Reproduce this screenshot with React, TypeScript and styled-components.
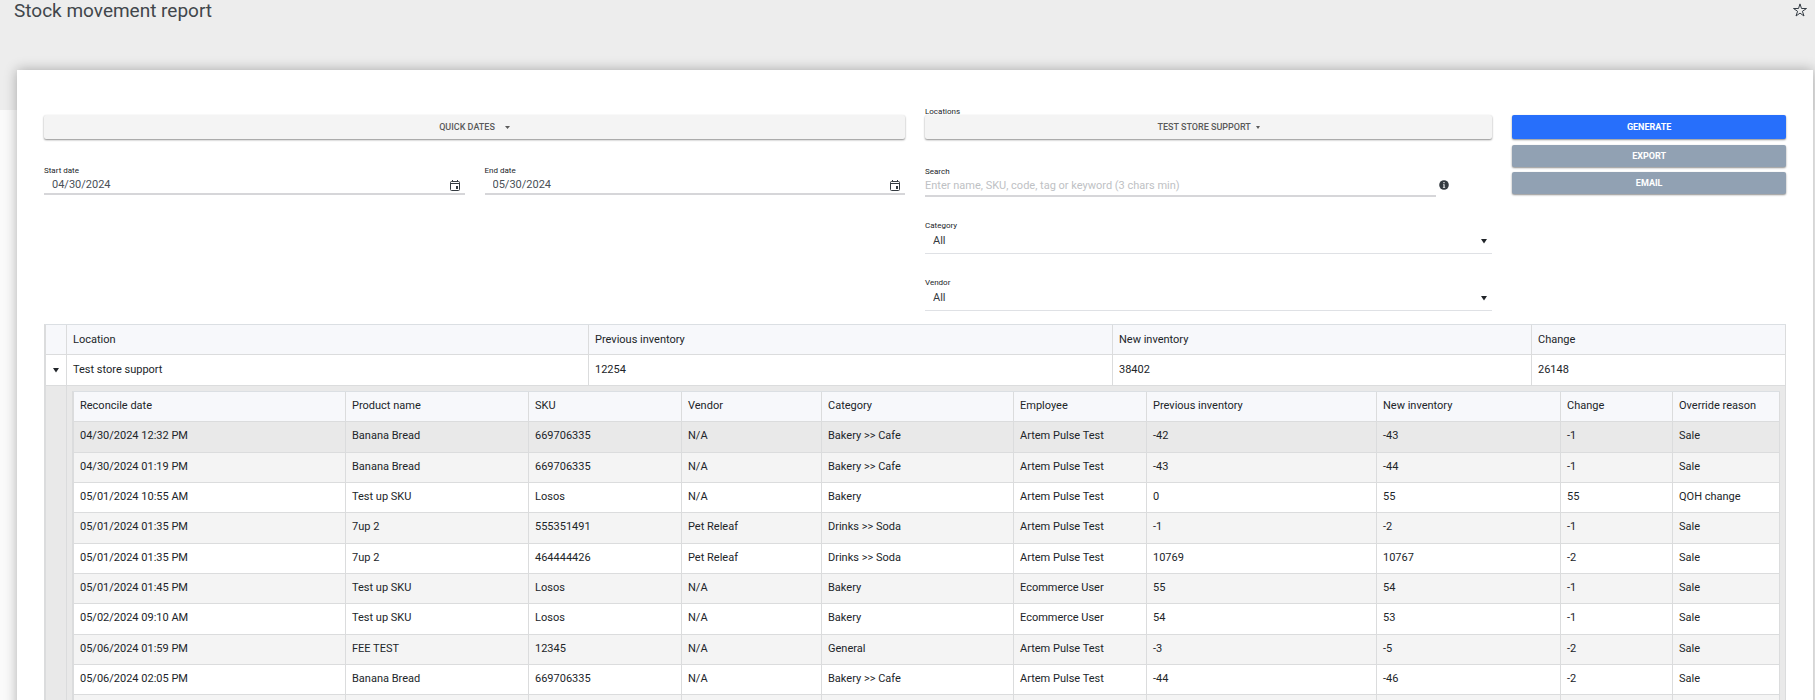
import React from "react";
import styled, { createGlobalStyle, css } from "styled-components";

const GlobalStyle = createGlobalStyle`
  *, *::before, *::after { box-sizing: border-box; }
  body { margin: 0; background: #fafafa; color: #212529; font: 11px/14px Roboto, "Liberation Sans", sans-serif; }
  button, input, select { font-family: inherit; }
`;

const Page = styled.div`
  height: 100vh;
  overflow: hidden;
  background: linear-gradient(#ededed, #ededed) no-repeat top / 100% 110px;
`;

const Header = styled.header`
  display: flex;
  justify-content: space-between;
  align-items: flex-start;
  height: 70px;
  padding: 0 7px 0 14px;
`;

const Title = styled.h1`
  margin: 0;
  font-size: 19px;
  line-height: 22px;
  font-weight: 400;
  color: #41464b;
`;

const StarButton = styled.button`
  display: flex;
  margin: 2px 0 0;
  padding: 0;
  border: 0;
  background: none;
  color: #343c44;
`;

const Card = styled.main`
  min-height: calc(100vh - 70px);
  margin: 0 2px 0 17px;
  padding: 37px 27px 0;
  background: #fff;
  box-shadow: 0 0 12px rgba(0, 0, 0, 0.3);
`;

const Filters = styled.form`
  display: flex;
  margin: 0 -10px;
`;

const Column = styled.div<{ $span: number; $offset?: boolean }>`
  flex: 0 0 calc(100% * ${(p) => p.$span} / 12);
  padding: ${(p) => (p.$offset ? "8px" : "0")} 10px 0;
`;

const buttonShadow = css`
  border: 0;
  border-radius: 2px;
  box-shadow: 0 1px 2px rgba(0, 0, 0, 0.45);
`;

const DropButton = styled.button<{ $gap: number }>`
  ${buttonShadow}
  display: flex;
  align-items: center;
  justify-content: center;
  gap: ${(p) => p.$gap}px;
  width: 100%;
  height: 24px;
  padding: 0;
  background: #f4f4f4;
  color: #5a5a5a;
  font-size: 9px;
  line-height: 12px;
  font-weight: 500;
`;

const DateRow = styled.div`
  display: flex;
  gap: 20px;
  margin-top: 26px;
`;

const Field = styled.div`
  flex: 1;
  min-width: 0;
`;

const Label = styled.label`
  display: block;
  font-size: 8px;
  line-height: 12px;
  color: #212529;
`;

const ButtonLabel = styled(Label)`
  line-height: 10px;
  margin-bottom: -2px;
`;

const InputLine = styled.div`
  display: flex;
  align-items: center;
  height: 18px;
  padding: 0 5px 1px 8px;
  border-bottom: 2px solid #d6d6d9;
`;

const TextInput = styled.input`
  flex: 1;
  min-width: 0;
  height: 15px;
  padding: 0;
  border: 0;
  outline: 0;
  background: none;
  color: #495057;
  font-size: 11px;
`;

const PickerButton = styled.button`
  display: flex;
  margin-top: 2px;
  padding: 0;
  border: 0;
  background: none;
  color: #343a40;
`;

const SearchRow = styled.div`
  display: flex;
  align-items: flex-start;
  gap: 3px;
  padding-right: 43px;
`;

const SearchInput = styled(TextInput)`
  height: 19px;
  padding-bottom: 3px;
  border-bottom: 2px solid #d6d6d9;
  &::placeholder { color: #bec1c4; opacity: 1; }
`;

const InfoIcon = styled.svg`
  margin-top: 2px;
`;

const Stack = styled.div`
  display: flex;
  flex-direction: column;
  gap: 23px;
  margin-top: 27px;
`;

const SelectLine = styled.div`
  display: flex;
  position: relative;
  border-bottom: 1px solid #dfe1e5;
`;

const Select = styled.select`
  appearance: none;
  width: 100%;
  height: 21px;
  padding: 0 8px 4px;
  border: 0;
  outline: 0;
  background: none;
  color: #343a40;
  font-size: 11px;
`;

const SelectCaret = styled.span`
  position: absolute;
  right: 5px;
  top: 6px;
  display: flex;
  pointer-events: none;
`;

const Actions = styled.div`
  display: flex;
  flex-direction: column;
  gap: 5px;
`;

const ActionButton = styled.button<{ $primary?: boolean }>`
  ${buttonShadow}
  height: ${(p) => (p.$primary ? 24 : 22)}px;
  margin-bottom: ${(p) => (p.$primary ? 1 : 0)}px;
  padding: 0;
  background: ${(p) => (p.$primary ? "#276ffb" : "#91a1b3")};
  color: #fff;
  font-size: 9px;
  line-height: 12px;
  font-weight: 700;
`;

const Table = styled.table`
  width: 100%;
  table-layout: fixed;
  border-collapse: separate;
  border-spacing: 0;
  border-top: 1px solid #dbdfe3;
  border-left: 2px solid #dbdcdd;
  background: #fff;
`;

const OuterTable = styled(Table)`
  margin-top: 13px;
`;

const cell = css`
  padding: 0 5px 0 6px;
  border-right: 1px solid #dbdcdd;
  border-bottom: 1px solid #dbdcdd;
  font-weight: 400;
  text-align: left;
  white-space: nowrap;
`;

const Th = styled.th`
  ${cell}
  height: 30px;
  background: #f7f8fb;
`;

const Td = styled.td`
  ${cell}
`;

const InnerTable = styled(Table)`
  ${Th}, ${Td} { padding-bottom: 2px; }
`;

const SummaryRow = styled.tr`
  height: 31px;
`;

const MovementRow = styled.tr<{ $active?: boolean }>`
  height: 30px;
  background: ${(p) => (p.$active ? "#e9e9e9" : "#fff")};
  &:nth-child(even) { background: #f4f4f4; }
  &:nth-child(3n + 1) { height: 31px; }
`;

const ExpandCell = styled(Td)`
  padding: 0;
`;

const ExpandButton = styled.button`
  display: flex;
  margin: 0 auto;
  padding: 0 1px 0 0;
  border: 0;
  background: none;
`;

const DetailGutter = styled(Td)`
  background: #e9e9e9;
`;

const DetailCell = styled(Td)`
  padding: 5px;
  background: #e9e9e9;
`;

const Caret = ({ size = 6, color = "#212529" }: { size?: number; color?: string }) => (
  <svg width={size} height={size} viewBox="0 0 6 6" aria-hidden="true">
    <path d="M0 1h6L3 5.4z" fill={color} />
  </svg>
);

const SmallCaret = ({ width }: { width: number }) => (
  <svg width={width} height="3" viewBox="0 0 6 3" preserveAspectRatio="none" aria-hidden="true">
    <path d="M0 0h6L3 3z" fill="#5a5a5a" />
  </svg>
);

const CalendarIcon = () => (
  <svg width="10" height="11" viewBox="0 0 10 11" fill="none" aria-hidden="true">
    <rect x="0.5" y="1.5" width="9" height="9" rx="1" stroke="currentColor" />
    <path d="M1 3.500h8" stroke="currentColor" />
    <path d="M2.500 0v2M7.500 0v2" stroke="currentColor" />
    <rect x="6" y="6" width="2" height="3" fill="currentColor" />
  </svg>
);

const StarIcon = () => (
  <svg width="16" height="16" viewBox="0 0 16 16" fill="none" stroke="currentColor" aria-hidden="true">
    <path d="M8 1.900l1.500 4.600h5L10.400 9.300l1.600 4.700L8 11.100 4 14l1.600-4.700L1.500 6.500h5z" />
  </svg>
);

const summaryColumns: [string, number][] = [
  ["", 21],
  ["Location", 522],
  ["Previous inventory", 524],
  ["New inventory", 419],
  ["Change", 254],
];

const movementColumns: [string, number][] = [
  ["Reconcile date", 272],
  ["Product name", 183],
  ["SKU", 153],
  ["Vendor", 140],
  ["Category", 192],
  ["Employee", 133],
  ["Previous inventory", 230],
  ["New inventory", 184],
  ["Change", 112],
  ["Override reason", 107],
];

const movements: string[][] = [
  ["04/30/2024 12:32 PM", "Banana Bread", "669706335", "N/A", "Bakery >> Cafe", "Artem Pulse Test", "-42", "-43", "-1", "Sale"],
  ["04/30/2024 01:19 PM", "Banana Bread", "669706335", "N/A", "Bakery >> Cafe", "Artem Pulse Test", "-43", "-44", "-1", "Sale"],
  ["05/01/2024 10:55 AM", "Test up SKU", "Losos", "N/A", "Bakery", "Artem Pulse Test", "0", "55", "55", "QOH change"],
  ["05/01/2024 01:35 PM", "7up 2", "555351491", "Pet Releaf", "Drinks >> Soda", "Artem Pulse Test", "-1", "-2", "-1", "Sale"],
  ["05/01/2024 01:35 PM", "7up 2", "464444426", "Pet Releaf", "Drinks >> Soda", "Artem Pulse Test", "10769", "10767", "-2", "Sale"],
  ["05/01/2024 01:45 PM", "Test up SKU", "Losos", "N/A", "Bakery", "Ecommerce User", "55", "54", "-1", "Sale"],
  ["05/02/2024 09:10 AM", "Test up SKU", "Losos", "N/A", "Bakery", "Ecommerce User", "54", "53", "-1", "Sale"],
  ["05/06/2024 01:59 PM", "FEE TEST", "12345", "N/A", "General", "Artem Pulse Test", "-3", "-5", "-2", "Sale"],
  ["05/06/2024 02:05 PM", "Banana Bread", "669706335", "N/A", "Bakery >> Cafe", "Artem Pulse Test", "-44", "-46", "-2", "Sale"],
  Array(10).fill(""),
];

function DateField({ id, label, value }: { id: string; label: string; value: string }) {
  return (
    <Field>
      <Label htmlFor={id}>{label}</Label>
      <InputLine>
        <TextInput id={id} defaultValue={value} />
        <PickerButton type="button" aria-label={`Pick ${label.toLowerCase()}`}>
          <CalendarIcon />
        </PickerButton>
      </InputLine>
    </Field>
  );
}

function SelectField({ id, label }: { id: string; label: string }) {
  return (
    <div>
      <Label htmlFor={id}>{label}</Label>
      <SelectLine>
        <Select id={id} defaultValue="All">
          <option>All</option>
        </Select>
        <SelectCaret><Caret /></SelectCaret>
      </SelectLine>
    </div>
  );
}

function ColumnHead({ columns }: { columns: [string, number][] }) {
  return (
    <>
      <colgroup>
        {columns.map(([name, width], i) => <col key={name + i} width={width} />)}
      </colgroup>
      <thead>
        <tr>{columns.map(([name], i) => <Th key={name + i} scope="col">{name}</Th>)}</tr>
      </thead>
    </>
  );
}

function MovementTable() {
  return (
    <InnerTable>
      <ColumnHead columns={movementColumns} />
      <tbody>
        {movements.map((row, i) => (
          <MovementRow key={i} $active={i === 0}>
            {row.map((value, j) => <Td key={j}>{value}</Td>)}
          </MovementRow>
        ))}
      </tbody>
    </InnerTable>
  );
}

export default function App() {
  return (
    <>
      <GlobalStyle />
      <Page>
        <Header>
          <Title>Stock movement report</Title>
          <StarButton type="button" aria-label="Add to favorites"><StarIcon /></StarButton>
        </Header>
        <Card>
          <Filters onSubmit={(e) => e.preventDefault()}>
            <Column $span={6} $offset>
              <DropButton type="button" $gap={10}>QUICK DATES <SmallCaret width={5} /></DropButton>
              <DateRow>
                <DateField id="start" label="Start date" value="04/30/2024" />
                <DateField id="end" label="End date" value="05/30/2024" />
              </DateRow>
            </Column>
            <Column $span={4}>
              <ButtonLabel htmlFor="locations">Locations</ButtonLabel>
              <DropButton id="locations" type="button" $gap={5}>TEST STORE SUPPORT <SmallCaret width={4} /></DropButton>
              <Stack>
                <div>
                  <Label htmlFor="search">Search</Label>
                  <SearchRow>
                    <SearchInput id="search" placeholder="Enter name, SKU, code, tag or keyword (3 chars min)" />
                    <InfoIcon width="10" height="10" viewBox="0 0 10 10" role="img" aria-label="Search help">
                      <circle cx="5" cy="5" r="4.800" fill="#343a40" />
                      <path d="M4.300 2h1.400v1.200H4.300zM4 4.200h1.700v3H6.200v.8H3.900v-.8h.5V5H4z" fill="#d8dadc" />
                    </InfoIcon>
                  </SearchRow>
                </div>
                <SelectField id="category" label="Category" />
                <SelectField id="vendor" label="Vendor" />
              </Stack>
            </Column>
            <Column $span={2} $offset>
              <Actions>
                <ActionButton $primary>GENERATE</ActionButton>
                <ActionButton type="button">EXPORT</ActionButton>
                <ActionButton type="button">EMAIL</ActionButton>
              </Actions>
            </Column>
          </Filters>
          <OuterTable>
            <ColumnHead columns={summaryColumns} />
            <tbody>
              <SummaryRow>
                <ExpandCell>
                  <ExpandButton type="button" aria-label="Collapse location"><Caret /></ExpandButton>
                </ExpandCell>
                <Td>Test store support</Td>
                <Td>12254</Td>
                <Td>38402</Td>
                <Td>26148</Td>
              </SummaryRow>
              <tr>
                <DetailGutter />
                <DetailCell colSpan={4}><MovementTable /></DetailCell>
              </tr>
            </tbody>
          </OuterTable>
        </Card>
      </Page>
    </>
  );
}
